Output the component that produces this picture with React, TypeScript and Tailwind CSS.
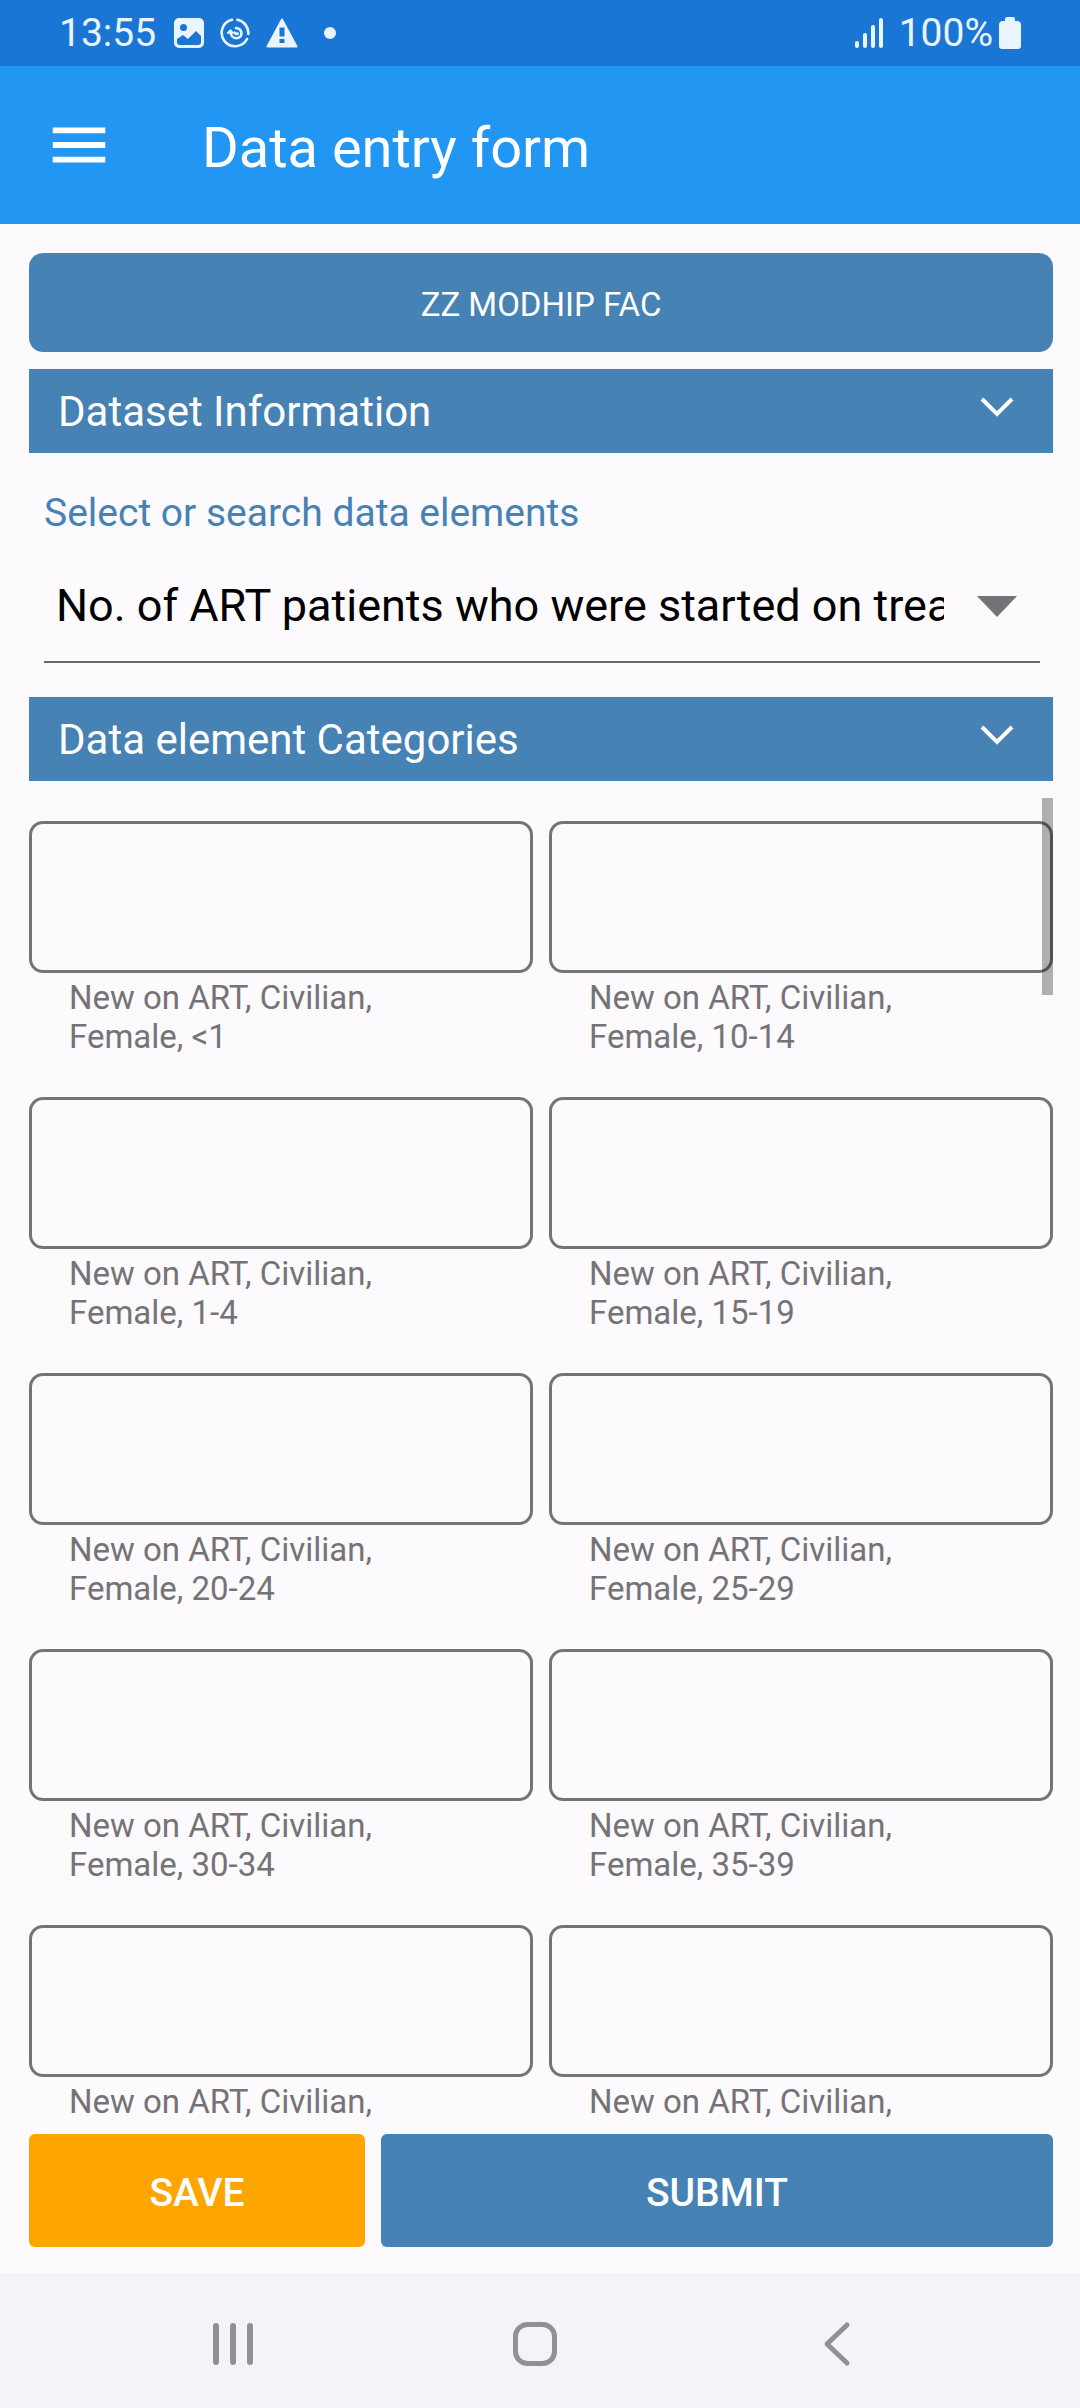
import React, { useState } from 'react';

interface CategoryField {
  id: string;
  label: string;
}

const categories: CategoryField[] = [
  { id: 'f-0-1', label: 'New on ART, Civilian, Female, <1' },
  { id: 'f-10-14', label: 'New on ART, Civilian, Female, 10-14' },
  { id: 'f-1-4', label: 'New on ART, Civilian, Female, 1-4' },
  { id: 'f-15-19', label: 'New on ART, Civilian, Female, 15-19' },
  { id: 'f-20-24', label: 'New on ART, Civilian, Female, 20-24' },
  { id: 'f-25-29', label: 'New on ART, Civilian, Female, 25-29' },
  { id: 'f-30-34', label: 'New on ART, Civilian, Female, 30-34' },
  { id: 'f-35-39', label: 'New on ART, Civilian, Female, 35-39' },
  { id: 'f-next-a', label: 'New on ART, Civilian,' },
  { id: 'f-next-b', label: 'New on ART, Civilian,' },
];

const StatusBar = () => (
  <div className="flex h-[66px] shrink-0 items-center justify-between bg-[#1a76d5] pl-[59px] pr-[59px] text-[39px] leading-[48px] text-[#eaf4ff]">
    <div className="flex items-center">
      <span>13:55</span>
      <svg className="ml-[18px] h-[30px] w-[30px]" viewBox="0 0 30 30" fill="currentColor">
        <path
          fillRule="evenodd"
          d="M5 0h20a5 5 0 0 1 5 5v20a5 5 0 0 1-5 5H5a5 5 0 0 1-5-5V5a5 5 0 0 1 5-5ZM9.500 6a3.500 3.500 0 1 0 0 7a3.500 3.500 0 1 0 0-7ZM3 21v3a3 3 0 0 0 3 3h18a3 3 0 0 0 3-3v-6l-5-5-8 8-5-4Z"
        />
      </svg>
      <svg className="ml-4 h-[30px] w-[30px]" viewBox="0 0 30 30" fill="none" stroke="currentColor" strokeWidth="2.600" strokeLinecap="round">
        <path d="M12 1.800A13.400 13.400 0 1 0 27 21M17.500 1.800A13.400 13.400 0 0 1 28.300 16" />
        <path d="M10.500 14c.3 3.800 3 6.300 6.200 6.300a4.700 4.700 0 0 0 4.700-4.700c0-3-2-5.300-5.400-5.600M14.500 14.500c.8 1.300 2 1.600 3.200 1" />
        <path d="M7.500 15l3-3 2.500 3Z" fill="currentColor" strokeWidth="1.500" strokeLinejoin="round" />
      </svg>
      <svg className="ml-4 h-[30px] w-8" viewBox="0 0 32 30">
        <path d="M16 1.500 30.500 28.500H1.500Z" fill="currentColor" stroke="currentColor" strokeWidth="2" strokeLinejoin="round" />
        <path d="M13.500 9.500h5v9h-5zM13.500 21h5v4h-5z" fill="#1a76d5" />
      </svg>
      <span className="ml-[26px] h-3 w-3 rounded-full bg-current" />
    </div>
    <div className="flex items-center">
      <svg className="h-[30px] w-7" viewBox="0 0 28 30" fill="currentColor">
        <rect x="0" y="23" width="4" height="7" rx="2" />
        <rect x="8" y="15" width="4" height="15" rx="2" />
        <rect x="16" y="7" width="4" height="23" rx="2" />
        <rect x="24" y="0" width="4" height="30" rx="2" />
      </svg>
      <span className="ml-4">100%</span>
      <svg className="ml-[6px] h-8 w-[22px]" viewBox="0 0 22 32" fill="currentColor">
        <path d="M6 4V2q0-2 2-2h6q2 0 2 2v2h2q4 0 4 4v21q0 3-3 3H3q-3 0-3-3V8q0-4 4-4Z" />
      </svg>
    </div>
  </div>
);

const SectionHeader = ({ title }: { title: string }) => (
  <button type="button" className="flex h-[84px] w-full shrink-0 items-center justify-between bg-[#4682b4] pl-[29px] pr-6 text-left text-[42px] leading-[56px] text-white">
    <span className="pt-[2px]">{title}</span>
    <svg className="mb-2 h-16 w-16" viewBox="0 0 64 64" fill="none" stroke="currentColor" strokeWidth="4">
      <path d="M17 24 32 39 47 24" />
    </svg>
  </button>
);

export default function App() {
  const [values, setValues] = useState<Record<string, string>>({});

  return (
    <main className="flex h-screen flex-col bg-[#fcfafc] font-[Roboto,sans-serif]">
      <StatusBar />

      <header className="flex h-[158px] shrink-0 items-center bg-[#2196f3] pl-11 text-white">
        <button type="button" aria-label="Menu">
          <svg className="h-[70px] w-[70px]" viewBox="0 0 24 24" fill="currentColor">
            <path d="M3 18h18v-2H3v2zm0-5h18v-2H3v2zm0-7v2h18V6H3z" />
          </svg>
        </button>
        <h1 className="ml-[88px] pt-[6px] text-[56px] leading-[64px]">Data entry form</h1>
      </header>

      <div className="flex min-h-0 flex-1 flex-col pb-[26px] pl-[29px] pr-[27px] pt-[29px]">
        <button type="button" className="mb-[17px] h-[99px] shrink-0 rounded-[14px] bg-[#4682b4] pt-[4px] text-[33px] leading-[40px] text-white">
          ZZ MODHIP FAC
        </button>

        <SectionHeader title="Dataset Information" />

        <div className="mb-[34px] shrink-0 pl-[15px] pr-[13px] pt-8">
          <label htmlFor="data-element" className="block text-[39px] leading-[56px] text-[#4682b4]">
            Select or search data elements
          </label>
          <div className="relative mt-2 border-b-2 border-[#69676b]">
            <select id="data-element" className="block h-[112px] w-full appearance-none bg-transparent pl-3 pr-24 pt-[2px] text-[45px] text-black">
              <option>No. of ART patients who were started on treatment</option>
            </select>
            <svg className="pointer-events-none absolute right-[23px] top-[47px] h-[21px] w-10" viewBox="0 0 40 21" fill="#757377">
              <path d="M0 0h40L20 21Z" />
            </svg>
          </div>
        </div>

        <SectionHeader title="Data element Categories" />

        {/* Scrolling list of category fields */}
        <div className="relative mb-3 mt-[17px] min-h-0 flex-1 overflow-hidden">
          <div className="grid grid-cols-2 gap-x-4 pt-[23px]">
            {categories.map((field) => (
              <div key={field.id} className="h-[276px]">
                <input
                  id={field.id}
                  type="text"
                  inputMode="numeric"
                  value={values[field.id] ?? ''}
                  onChange={(e) => setValues({ ...values, [field.id]: e.target.value })}
                  className="block h-[152px] w-full rounded-[14px] border-3 border-[#757377] bg-transparent px-10 text-[42px] text-black"
                />
                <label htmlFor={field.id} className="mt-[5px] block w-[400px] pl-10 text-[33px] leading-[39px] text-[#757377]">
                  {field.label}
                </label>
              </div>
            ))}
          </div>
          <div className="absolute right-0 top-0 h-[197px] w-[11px] bg-black/30" />
        </div>

        <div className="grid shrink-0 grid-cols-[1fr_2fr] gap-4 text-[39px] font-medium leading-[48px] text-white">
          <button type="submit" className="h-[113px] rounded-md bg-[#ffa500] pt-[4px]">
            SAVE
          </button>
          <button type="submit" className="h-[113px] rounded-md bg-[#4682b4] pt-[4px]">
            SUBMIT
          </button>
        </div>
      </div>

      <nav className="flex h-[135px] shrink-0 items-center justify-center bg-[#f5f3f7] pr-[10px] pt-[6px] text-[#919094]">
        <button type="button" aria-label="Recents">
          <svg className="h-12 w-12" viewBox="0 0 48 48" fill="none" stroke="currentColor" strokeWidth="6" strokeLinecap="round">
            <path d="M7 6v36M24 6v36M41 6v36" />
          </svg>
        </button>
        <button type="button" aria-label="Home" className="mx-[254px]">
          <svg className="h-12 w-12" viewBox="0 0 48 48" fill="none" stroke="currentColor" strokeWidth="5">
            <rect x="4.500" y="4.500" width="39" height="39" rx="12" />
          </svg>
        </button>
        <button type="button" aria-label="Back">
          <svg className="h-12 w-12" viewBox="0 0 48 48" fill="none" stroke="currentColor" strokeWidth="5" strokeLinecap="round" strokeLinejoin="round">
            <path d="M34 5 14 24l20 19" />
          </svg>
        </button>
      </nav>
    </main>
  );
}
